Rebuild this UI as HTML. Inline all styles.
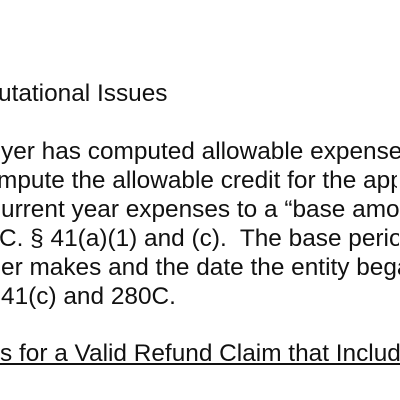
<!DOCTYPE html>
<html><head><style>
body{margin:0;width:400px;height:400px;overflow:hidden;background:#fff;position:relative;font-family:"Liberation Sans",Arial,sans-serif;font-size:24.4px;color:#111}
div{position:absolute;white-space:nowrap;line-height:29px;overflow:hidden;width:400px}
</style></head><body>
<div style="left:-2px;top:79px">utational Issues</div>
<div style="left:1px;top:137px">yer has computed allowable expenses</div>
<div style="left:-3px;top:166px">mpute the allowable credit for the applicable</div>
<div style="left:1px;top:195px">urrent year expenses to a “base amount”</div>
<div style="left:-1px;top:224px">C. § 41(a)(1) and (c).&nbsp; The base period</div>
<div style="left:1px;top:253px">er makes and the date the entity began</div>
<div style="left:1px;top:282px">41(c) and 280C.</div>
<div style="left:0px;top:339px;text-decoration:underline">s for a Valid Refund Claim that Includes</div>
</body></html>
